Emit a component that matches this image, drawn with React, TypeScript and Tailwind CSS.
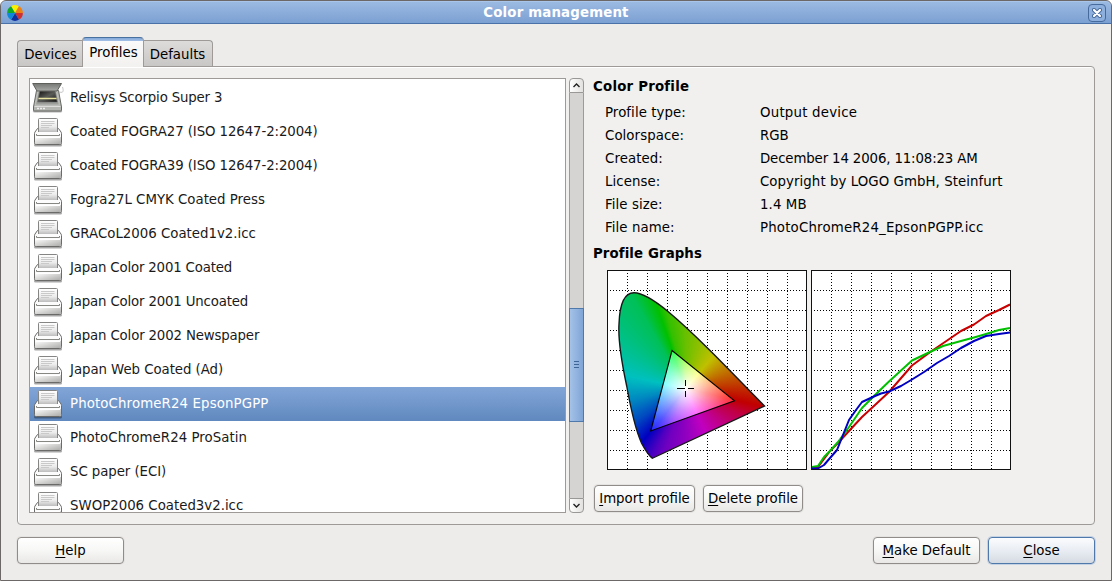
import React from 'react';

const profiles = [
  ['Relisys Scorpio Super 3', 'tracking-[-0.16px]'],
  ['Coated FOGRA27 (ISO 12647-2:2004)', 'tracking-[-0.1px]'],
  ['Coated FOGRA39 (ISO 12647-2:2004)', 'tracking-[-0.1px]'],
  ['Fogra27L CMYK Coated Press', ''],
  ['GRACoL2006 Coated1v2.icc', ''],
  ['Japan Color 2001 Coated', 'tracking-[-0.18px]'],
  ['Japan Color 2001 Uncoated', 'tracking-[-0.17px]'],
  ['Japan Color 2002 Newspaper', 'tracking-[-0.16px]'],
  ['Japan Web Coated (Ad)', 'tracking-[-0.05px]'],
  ['PhotoChromeR24 EpsonPGPP', 'tracking-[0.12px]'],
  ['PhotoChromeR24 ProSatin', 'tracking-[0.05px]'],
  ['SC paper (ECI)', 'tracking-[-0.06px]'],
  ['SWOP2006 Coated3v2.icc', ''],
];

const details = [
  ['Profile type:', 'Output device', 'tracking-[0.22px]'],
  ['Colorspace:', 'RGB', ''],
  ['Created:', 'December 14 2006, 11:08:23 AM', 'tracking-[-0.14px]'],
  ['License:', 'Copyright by LOGO GmbH, Steinfurt', 'tracking-[0.06px]'],
  ['File size:', '1.4 MB', 'tracking-[0.1px]'],
  ['File name:', 'PhotoChromeR24_EpsonPGPP.icc', 'tracking-[0.18px]'],
];

function AppIcon() {
  const colors = ['#fcf000', '#f08010', '#d03030', '#1030a0', '#1088d8', '#10a828'];
  return (
    <svg width="16" height="16" viewBox="-8 -8 16 16" className="block">
      {colors.map((c, i) => {
        const a = ((i * 60 - 120) * Math.PI) / 180;
        const b = ((i * 60 - 60) * Math.PI) / 180;
        return (
          <path
            key={c}
            fill={c}
            d={`M0 0L${7.9 * Math.cos(a)} ${7.9 * Math.sin(a)}A7.9 7.9 0 0 1 ${7.9 * Math.cos(b)} ${7.9 * Math.sin(b)}Z`}
          />
        );
      })}
    </svg>
  );
}

function Defs() {
  return (
    <svg width="0" height="0" className="absolute">
      <defs>
        <linearGradient id="paper" x1="0" y1="0" x2="0" y2="1">
          <stop offset="0" stopColor="#fff" />
          <stop offset="0.6" stopColor="#ececec" />
          <stop offset="1" stopColor="#bdbdbd" />
        </linearGradient>
        <linearGradient id="body" x1="0" y1="0" x2="1" y2="1">
          <stop offset="0" stopColor="#fff" />
          <stop offset="1" stopColor="#acacaa" />
        </linearGradient>
        <linearGradient id="lid" x1="0" y1="0" x2="0" y2="1">
          <stop offset="0" stopColor="#747773" />
          <stop offset="1" stopColor="#a9aba8" />
        </linearGradient>
        <linearGradient id="glass" x1="0" y1="0" x2="1" y2="1">
          <stop offset="0" stopColor="#111" />
          <stop offset="0.5" stopColor="#5a5c58" />
          <stop offset="1" stopColor="#111" />
        </linearGradient>
      </defs>
    </svg>
  );
}

function PrinterIcon() {
  return (
    <svg width="32" height="32" viewBox="0 0 32 32" className="block shrink-0">
      <rect x="2" y="27.5" width="28" height="3" rx="1.5" fill="#000" opacity=".35" />
      <path d="M5.500 12.500L3 16q-.5 .8-.5 1.700v9.100q0 1.700 1.700 1.700h23.600q1.700 0 1.700-1.700v-9.100q0-.9-.5-1.700l-2.500-3.500z" fill="#fcfcfc" stroke="#6a6b69" />
      <path d="M6.500 16V3.500q0-1 1-1h17q1 0 1 1V16z" fill="url(#paper)" />
      <path d="M6.500 16V3.500q0-1 1-1h17q1 0 1 1V16" fill="none" stroke="#858684" />
      <path d="M9 5.500h13.500M9 7.500h13.500M9 9.500h11M9 11.500h8" stroke="#c9c9c9" />
      <path d="M3 21h26v5.600q0 1.400-1.400 1.400H4.400Q3 28 3 26.600z" fill="url(#body)" />
      <path d="M4.500 18v1.500h23V18" fill="none" stroke="#868783" />
      <path d="M4 21.500h24" stroke="#fff" />
    </svg>
  );
}

function ScannerIcon() {
  return (
    <svg width="32" height="32" viewBox="0 0 32 32" className="block shrink-0">
      <rect x="1" y="28" width="29" height="2.6" rx="1.3" fill="#000" opacity=".3" />
      <path d="M27.5 10c4.5 1.5 4-2 3-5" fill="none" stroke="#c4c4c4" />
      <path d="M4.500 8.500h22L29.500 25v3q0 1-1 1H2.500q-1 0-1-1v-3z" fill="#b4b6b2" stroke="#666864" />
      <path d="M6 9.500h18.500l2.800 13.500H3.500z" fill="#9b9e99" stroke="#c3c5c1" strokeWidth=".8" />
      <path d="M7.800 9h15.200l2.200 11H5.700z" fill="url(#glass)" stroke="#666" strokeWidth=".6" />
      <path d="M6.500 16.500h18" stroke="#e8e4a0" strokeWidth="1.3" />
      <path d="M.7 1.500h28.800L25 9H5z" fill="url(#lid)" stroke="#5e605c" />
      <path d="M2.500 24.500h26" stroke="#dcddda" />
      <path d="M5 26.500h9" stroke="#eee" strokeWidth="1.500" strokeDasharray="2 1" />
    </svg>
  );
}

function Grid() {
  const steps = [20, 40, 60, 80, 100, 120, 140, 160, 180];
  return (
    <g stroke="#000" strokeDasharray="1 2" shapeRendering="crispEdges">
      {steps.map((s) => (
        <path key={s} d={`M3 ${s + 0.5}H199M${s + 0.5} 3V199`} />
      ))}
    </g>
  );
}

const locus =
  'M45.3 188.3C41 185 38.5 180.5 34.7 173.5C28 159 23.5 137 19.7 116C15 94 11 70 12 54C12.5 38 16 22.7 27 22.7C35 22.7 49 31.5 61.3 41.7C85 61.5 112 89 157.5 136Z';

function Gamut() {
  return (
    <div className="grid h-[200px] w-[200px] bg-white">
      <svg width="200" height="200" className="[grid-area:1/1]">
        <Grid />
      </svg>
      <div className="[grid-area:1/1] [clip-path:path('M45.3_188.3C41_185_38.5_180.5_34.7_173.5C28_159_23.5_137_19.7_116C15_94_11_70_12_54C12.5_38_16_22.7_27_22.7C35_22.7_49_31.5_61.3_41.7C85_61.5_112_89_157.5_136Z')] bg-[conic-gradient(from_0deg_at_78.5px_118.5px,#68c000_0deg,#90c000_18deg,#c0c000_41deg,#c08000_63deg,#c04000_84deg,#c00000_103deg,#c00040_114deg,#c00080_132deg,#c000c0_156deg,#9000c0_180deg,#7000c0_198deg,#5000c0_206deg,#0000c0_219deg,#0048c0_236deg,#0088c0_258deg,#00c0c0_282deg,#00c088_308deg,#00c058_330deg,#00c000_341deg,#34c000_346deg,#68c000_360deg)]" />
      <div className="[grid-area:1/1] [clip-path:polygon(65px_80.5px,127.5px_130.7px,43.7px_161px)] bg-[radial-gradient(circle_at_78.5px_118.5px,#fff_0px,rgba(255,255,255,0.5)_23px,rgba(255,255,255,0.2)_40px,rgba(255,255,255,0)_56px),conic-gradient(from_0deg_at_78.5px_118.5px,#80ff00_0deg,#ffff00_41deg,#ff8020_75deg,#ff2020_103deg,#ff0090_130deg,#ff00ff_156deg,#8010ff_200deg,#2020ff_218deg,#0088ff_248deg,#00ffff_282deg,#00ff90_320deg,#00ff30_340deg,#80ff00_360deg)]" />
      <svg width="200" height="200" className="relative [grid-area:1/1]">
        <path d={locus} fill="none" stroke="#181818" strokeWidth="1.4" />
        <path d="M65 80.5L127.5 130.7L43.7 161Z" fill="none" stroke="#000" strokeWidth="1.1" />
        <path d="M70 118.5h8M81 118.5h6M78.5 110v6M78.5 121v6" stroke="#000" shapeRendering="crispEdges" />
        <rect x=".5" y=".5" width="199" height="199" fill="none" stroke="#111" />
      </svg>
    </div>
  );
}

function Curves() {
  return (
    <svg width="200" height="200" className="block bg-white">
      <Grid />
      <g fill="none" strokeWidth="2" strokeLinejoin="round">
        <path d="M1 198L7 197L13 189L19 181L27 173L38 161L51 147L64 135L78 122L101 95.5L120 81.5L150 61L163 54.5L175 46L188 40L199 34.5" stroke="#c80000" />
        <path d="M1 197L7 196L13 187L19 181L27 172L38 157L51 138L64 125L78 111.5L90 100.5L101 90.5L120 81.5L132 76L150 71L163 67.5L175 64L188 60L199 58" stroke="#00c000" />
        <path d="M1 198.5H7L13 195L19 188L26 180L38 150L45 140L51 132L64 126L70 123.5L78 121.5L90 116L101 109.5L113 102L126 93L138 86L150 78L163 71L175 66L188 64L199 62.5" stroke="#0000c0" />
      </g>
      <rect x=".5" y=".5" width="199" height="199" fill="none" stroke="#111" />
    </svg>
  );
}

function Button({ mnemonic, rest, className = '', primary = false }: { mnemonic: string; rest: string; className?: string; primary?: boolean }) {
  const tone = primary
    ? 'border-[#5079ab] from-[#fbfcfe] via-[#e9edf3] to-[#d5dbe3] shadow-[0_0_0_1px_#c5d2e4]'
    : 'border-[#8f8c89] from-white via-[#f7f7f6] to-[#e9e8e6] shadow-[0_0_0_1px_#e4e3e1]';
  return (
    <button className={`flex items-center justify-center rounded-[4px] border bg-linear-to-b ${tone} ${className}`}>
      <span className="underline decoration-1 underline-offset-2">{mnemonic}</span>
      {rest}
    </button>
  );
}

function Arrow({ up = false }: { up?: boolean }) {
  return (
    <div className={`flex h-[15px] shrink-0 items-center justify-center border border-[#9a9896] bg-linear-to-r from-white to-[#e2e1df] ${up ? 'rounded-t-[4px]' : 'rounded-b-[4px]'}`}>
      <svg width="7" height="5" viewBox="0 0 7 5">
        <path d={up ? 'M.5 4L3.5 1L6.5 4' : 'M.5 1L3.5 4L6.5 1'} fill="none" stroke="#222" strokeWidth="1.4" />
      </svg>
    </div>
  );
}

export default function App() {
  return (
    <div className="h-[581px] w-[1112px] overflow-hidden bg-white font-['DejaVu_Sans',sans-serif] text-[13.33px] leading-[18px] text-black">
      <Defs />
      <div className="flex h-full flex-col overflow-hidden rounded-t-[6px] border border-[#6c6867] bg-[#edeceb]">
        <header className="-mx-px -mt-px flex h-6 shrink-0 items-center rounded-t-[6px] border border-b-[#4a72a8] border-x-[#4c6a94] border-t-[#3c5f92] bg-linear-to-b from-[#9dbbe3] to-[#7ba0d2] pl-1.5 pr-[5px] pt-px shadow-[inset_0_1px_0_#aac5ea]">
          <AppIcon />
          <h1 className="flex-1 pl-px text-center text-[13.33px] font-bold tracking-[0.17px] text-white">Color management</h1>
          <button className="flex h-[18px] w-[18px] items-center justify-center rounded-[4px] border border-[#476a9c] bg-[#8cafdd]">
            <svg width="10" height="10" viewBox="0 0 10 10">
              <path d="M2 2L8 8M8 2L2 8" stroke="#486b9c" strokeWidth="4.2" strokeLinecap="round" />
              <path d="M2 2L8 8M8 2L2 8" stroke="#fff" strokeWidth="2.2" strokeLinecap="round" />
            </svg>
          </button>
        </header>

        <div className="flex flex-1 flex-col px-4 pt-[13px]">
          <nav className="z-10 -mb-px flex items-end">
            <div className="mb-px flex h-[26px] w-[65px] items-center justify-center rounded-tl-[4px] border border-r-0 border-b-0 border-[#9d9a98] bg-linear-to-b from-[#dddcda] to-[#c9c7c5] pt-[3px] pl-px">Devices</div>
            <div className="flex h-[30px] w-[62px] items-center justify-center rounded-t-[4px] border-x border-t border-x-[#9d9a98] border-t-[#49719f] bg-[linear-gradient(#83a8da_0px,#a4c0e6_3px,#fafafa_3px,#f2f1f0_100%)] pl-px">Profiles</div>
            <div className="mb-px flex h-[26px] w-[69px] items-center justify-center rounded-tr-[4px] border border-b-0 border-l-0 border-[#9d9a98] bg-linear-to-b from-[#dddcda] to-[#c9c7c5] pt-[3px] pr-px">Defaults</div>
          </nav>

          <main className="flex h-[459px] w-[1078px] shrink-0 rounded-[4px] rounded-tl-none border border-[#9d9a98] bg-[#f1f0ee] pl-[11px] pt-[11px] shadow-[inset_1px_1px_0_#fff]">
            <ul className="h-[435px] w-[537px] shrink-0 overflow-hidden border border-[#9d9a98] bg-white pt-0.5">
              {profiles.map(([name, spacing], i) => (
                <li
                  key={name}
                  className={`flex h-[34px] items-center gap-[6px] pl-0.5 pb-px ${i === 9 ? 'bg-linear-to-b from-[#82a5d7] to-[#6089bf] text-white' : 'text-[#1a1a1a]'}`}
                >
                  {i === 0 ? <ScannerIcon /> : <PrinterIcon />}
                  <span className={spacing}>{name}</span>
                </li>
              ))}
            </ul>

            <div className="ml-[3px] flex h-[435px] w-[15px] shrink-0 flex-col">
              <Arrow up />
              <div className="h-[215px] border-x border-[#9d9a98] bg-[#d5d4d2]" />
              <div className="flex h-[114px] flex-col items-center justify-center gap-[2px] border border-[#5079ab] bg-linear-to-r from-[#a5c2e8] to-[#7fa5d6] pb-0.5">
                <i className="h-px w-[5px] bg-[#3f6496]" />
                <i className="h-px w-[5px] bg-[#3f6496]" />
                <i className="h-px w-[5px] bg-[#3f6496]" />
              </div>
              <div className="flex-1 border-x border-[#9d9a98] bg-[#d5d4d2]" />
              <Arrow />
            </div>

            <section className="-mt-px ml-[9px] w-[430px] shrink-0">
              <h2 className="h-6 pt-px text-[13.33px] font-bold tracking-[0.22px]">Color Profile</h2>
              <dl className="pl-3">
                {details.map(([label, value, spacing]) => (
                  <div key={label} className="flex h-[23px] items-center">
                    <dt className="w-[155px] tracking-[0.07px]">{label}</dt>
                    <dd className={spacing}>{value}</dd>
                  </div>
                ))}
              </dl>
              <h2 className="h-[31px] pt-[6px] text-[13.33px] font-bold tracking-[0.1px]">Profile Graphs</h2>
              <div className="flex gap-1 pl-[14px]">
                <Gamut />
                <Curves />
              </div>
              <div className="mt-[15px] flex gap-2 pl-px">
                <Button mnemonic="I" rest="mport profile" className="h-[27px] w-[101px]" />
                <Button mnemonic="D" rest="elete profile" className="h-[27px] w-[100px]" />
              </div>
            </section>
          </main>

          <footer className="mt-3 flex w-[1078px] justify-between">
            <Button mnemonic="H" rest="elp" className="h-[27px] w-[107px]" />
            <div className="flex gap-2">
              <Button mnemonic="M" rest="ake Default" className="h-[27px] w-[107px]" />
              <Button mnemonic="C" rest="lose" primary className="h-[27px] w-[107px]" />
            </div>
          </footer>
        </div>
      </div>
    </div>
  );
}
